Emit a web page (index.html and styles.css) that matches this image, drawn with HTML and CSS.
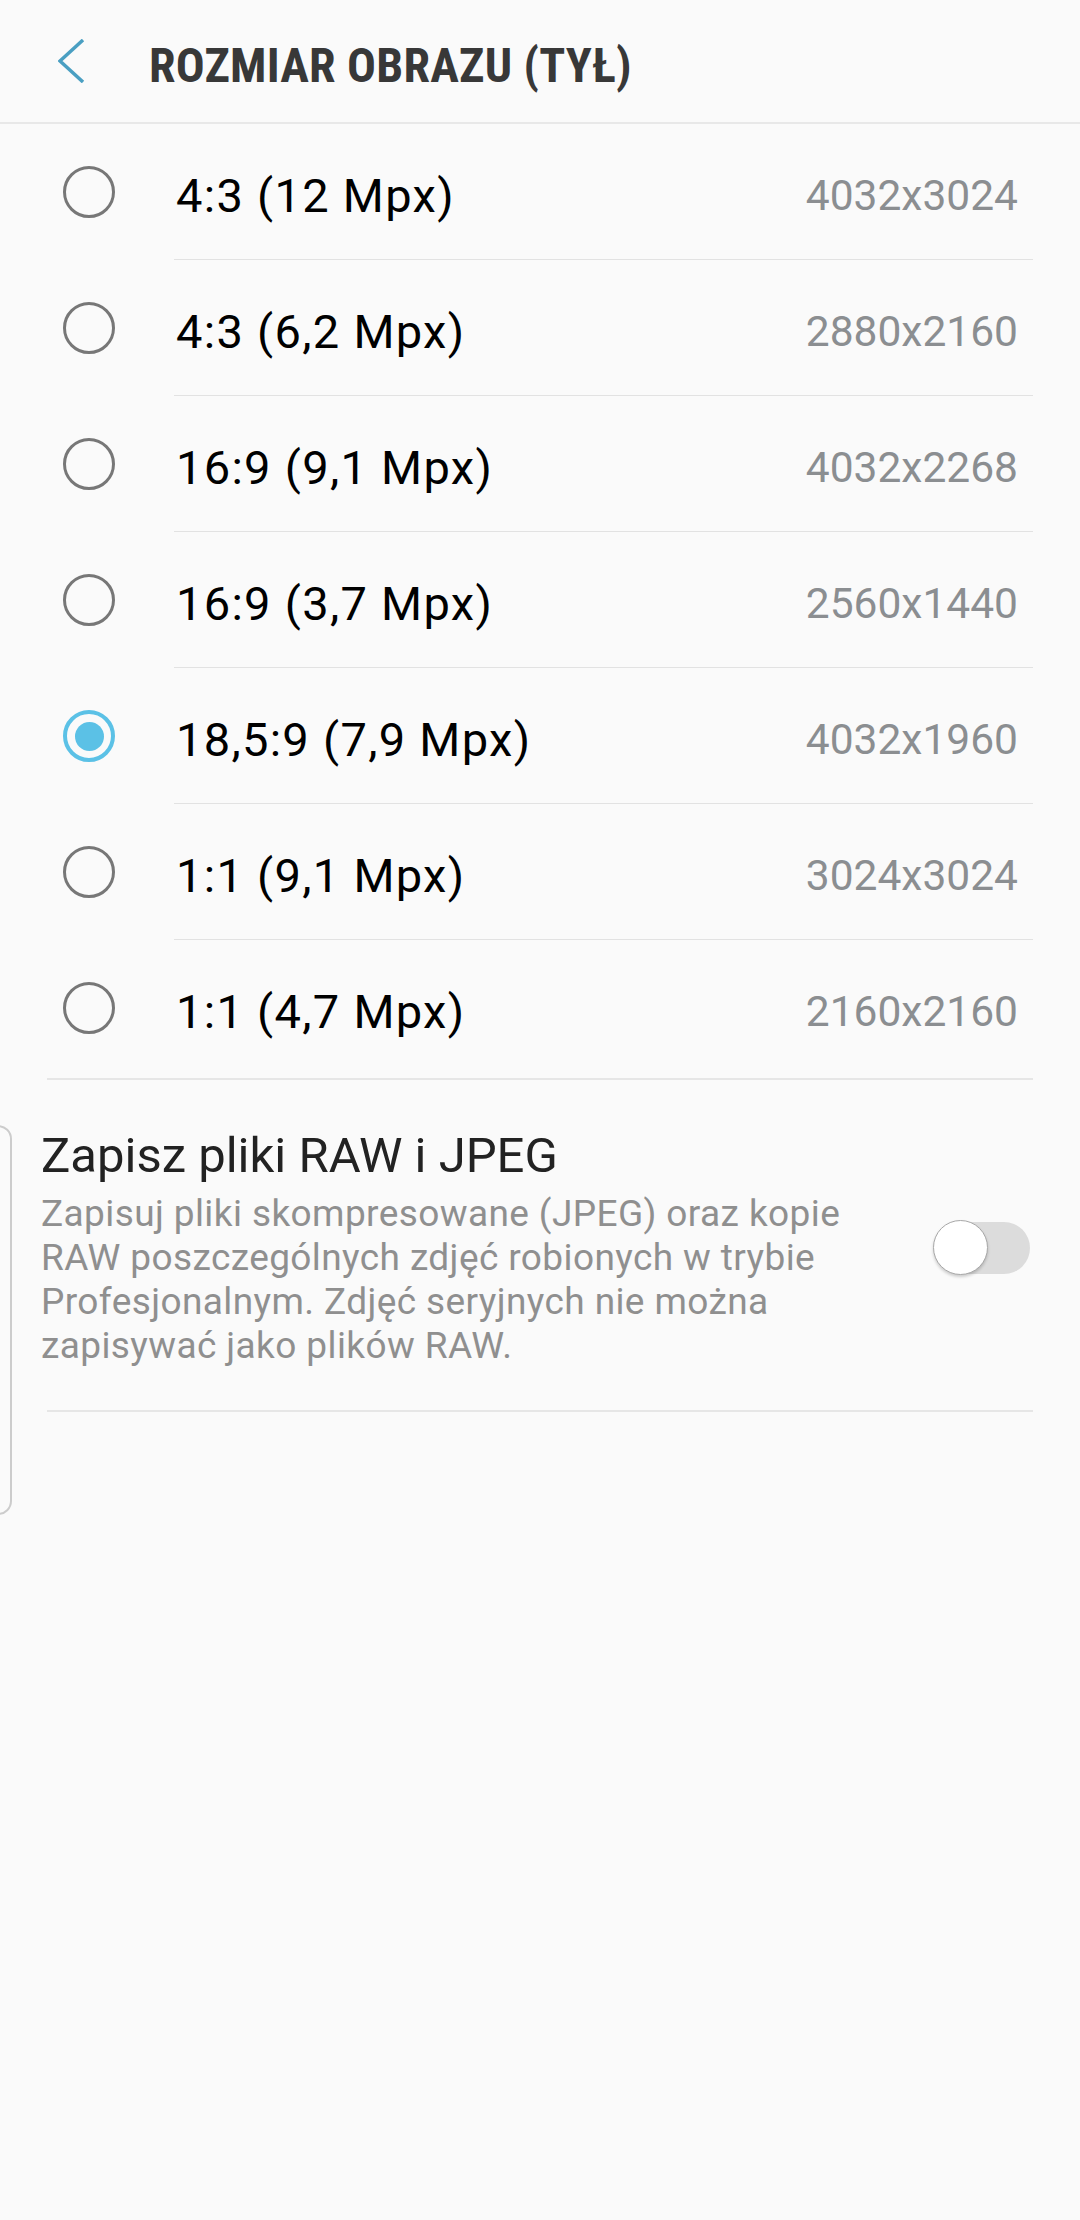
FILE: index.html
```html
<!DOCTYPE html>
<html lang="pl">
  <head>
    <meta charset="UTF-8">
    <meta name="viewport" content="width=device-width, initial-scale=1.0">
    <title>Rozmiar obrazu (tył)</title>
    <link rel="stylesheet" href="styles.css">
  </head>
  <body>

    <header class="app-bar">
      <svg class="back" width="28" height="44" viewBox="0 0 28 44">
        <polyline points="25,1 2,22 25,43" fill="none" stroke="#4a9fc2" stroke-width="3.5" />
      </svg>
      <h1 class="app-title">ROZMIAR OBRAZU (TYŁ)</h1>
    </header>

    <main>
      <ul class="size-list">
        <li class="size-row">
          <span class="radio"></span>
          <div class="size-body"><span class="size-name">4:3 (12 Mpx)</span><span class="size-value">4032x3024</span></div>
        </li>
        <li class="size-row">
          <span class="radio"></span>
          <div class="size-body"><span class="size-name">4:3 (6,2 Mpx)</span><span class="size-value">2880x2160</span></div>
        </li>
        <li class="size-row">
          <span class="radio"></span>
          <div class="size-body"><span class="size-name">16:9 (9,1 Mpx)</span><span class="size-value">4032x2268</span></div>
        </li>
        <li class="size-row">
          <span class="radio"></span>
          <div class="size-body"><span class="size-name">16:9 (3,7 Mpx)</span><span class="size-value">2560x1440</span></div>
        </li>
        <li class="size-row">
          <span class="radio checked"></span>
          <div class="size-body"><span class="size-name">18,5:9 (7,9 Mpx)</span><span class="size-value">4032x1960</span></div>
        </li>
        <li class="size-row">
          <span class="radio"></span>
          <div class="size-body"><span class="size-name">1:1 (9,1 Mpx)</span><span class="size-value">3024x3024</span></div>
        </li>
        <li class="size-row">
          <span class="radio"></span>
          <div class="size-body"><span class="size-name">1:1 (4,7 Mpx)</span><span class="size-value">2160x2160</span></div>
        </li>
      </ul>
      <div class="rule"></div>

      <div class="raw-item">
        <div class="raw-text">
          <div class="raw-title">Zapisz pliki RAW i JPEG</div>
          <div class="raw-desc">Zapisuj pliki skompresowane (JPEG) oraz kopie RAW poszczególnych zdjęć robionych w trybie Profesjonalnym. Zdjęć seryjnych nie można zapisywać jako plików RAW.</div>
        </div>
        <span class="switch"></span>
      </div>
      <div class="rule"></div>
    </main>

    <!-- edge panel handle -->
    <div class="edge-handle"></div>

  </body>
</html>
```

FILE: styles.css
```css
body {
  background-color: #fafafa;
  font-family: Roboto, "Noto Sans", sans-serif;
  color: #000000;
  margin: 0;
  padding: 0;
  min-height: 2220px;
  position: relative;
}

.app-bar {
  display: flex;
  align-items: center;
  height: 122px;
  padding-left: 58px;
  border-bottom: 2px solid #e8e8e8;
  box-sizing: content-box;
}

.back {
  display: block;
  flex-shrink: 0;
}

.app-title {
  margin: 8px 0 0 63px;
  font-size: 48px;
  font-weight: 700;
  font-stretch: 85%;
  letter-spacing: 0.2px;
  color: #383838;
}

.size-list {
  list-style: none;
  margin: 0 47px 3px 0;
  padding: 0;
}

.size-row {
  display: flex;
  align-items: center;
  padding-left: 63px;
}

.radio {
  flex-shrink: 0;
  width: 52px;
  height: 52px;
  box-sizing: border-box;
  border: 3px solid #777777;
  border-radius: 50%;
  margin-right: 59px;
  display: flex;
  align-items: center;
  justify-content: center;
}

.radio.checked {
  border: 4.5px solid #5bc1e6;
}

.radio.checked::after {
  content: "";
  width: 29px;
  height: 29px;
  border-radius: 50%;
  background-color: #5bc1e6;
}

.size-body {
  flex: 1;
  display: flex;
  align-items: center;
  justify-content: space-between;
  height: 136px;
  box-sizing: border-box;
  padding: 8px 15px 0 2px;
  border-bottom: 1px solid #e2e2e2;
}

.size-row:last-child .size-body {
  border-bottom: none;
  height: 135px;
}

.size-name {
  font-size: 47px;
  letter-spacing: 1.3px;
}

.size-value {
  font-size: 42.5px;
  color: #8b8e91;
}

.rule {
  height: 2px;
  margin: 0 47px;
  background-color: #e6e6e6;
}

.raw-item {
  display: flex;
  align-items: center;
  padding: 47px 50px 42px 41px;
}

.raw-text {
  flex: 1;
  margin-right: 50px;
}

.raw-title {
  font-size: 49px;
  line-height: 58px;
  color: #222222;
}

.raw-desc {
  margin-top: 7px;
  font-size: 37px;
  letter-spacing: 0.4px;
  line-height: 44px;
  color: #8f8f8f;
}

.switch {
  flex-shrink: 0;
  position: relative;
  width: 97px;
  height: 56px;
}

.switch::before {
  content: "";
  position: absolute;
  left: 4px;
  right: 0;
  top: 2px;
  height: 52px;
  border-radius: 26px;
  background-color: #dcdcdc;
}

.switch::after {
  content: "";
  position: absolute;
  left: 0;
  top: 0;
  width: 55px;
  height: 55px;
  box-sizing: border-box;
  border-radius: 50%;
  border: 1.5px solid #a8a8a8;
  background-color: #ffffff;
  box-shadow: 0 2px 3px rgba(0, 0, 0, 0.18);
}

.edge-handle {
  position: absolute;
  left: -18px;
  top: 1125px;
  width: 30px;
  height: 390px;
  box-sizing: border-box;
  border: 2px solid #cccccc;
  border-radius: 14px;
}
```
